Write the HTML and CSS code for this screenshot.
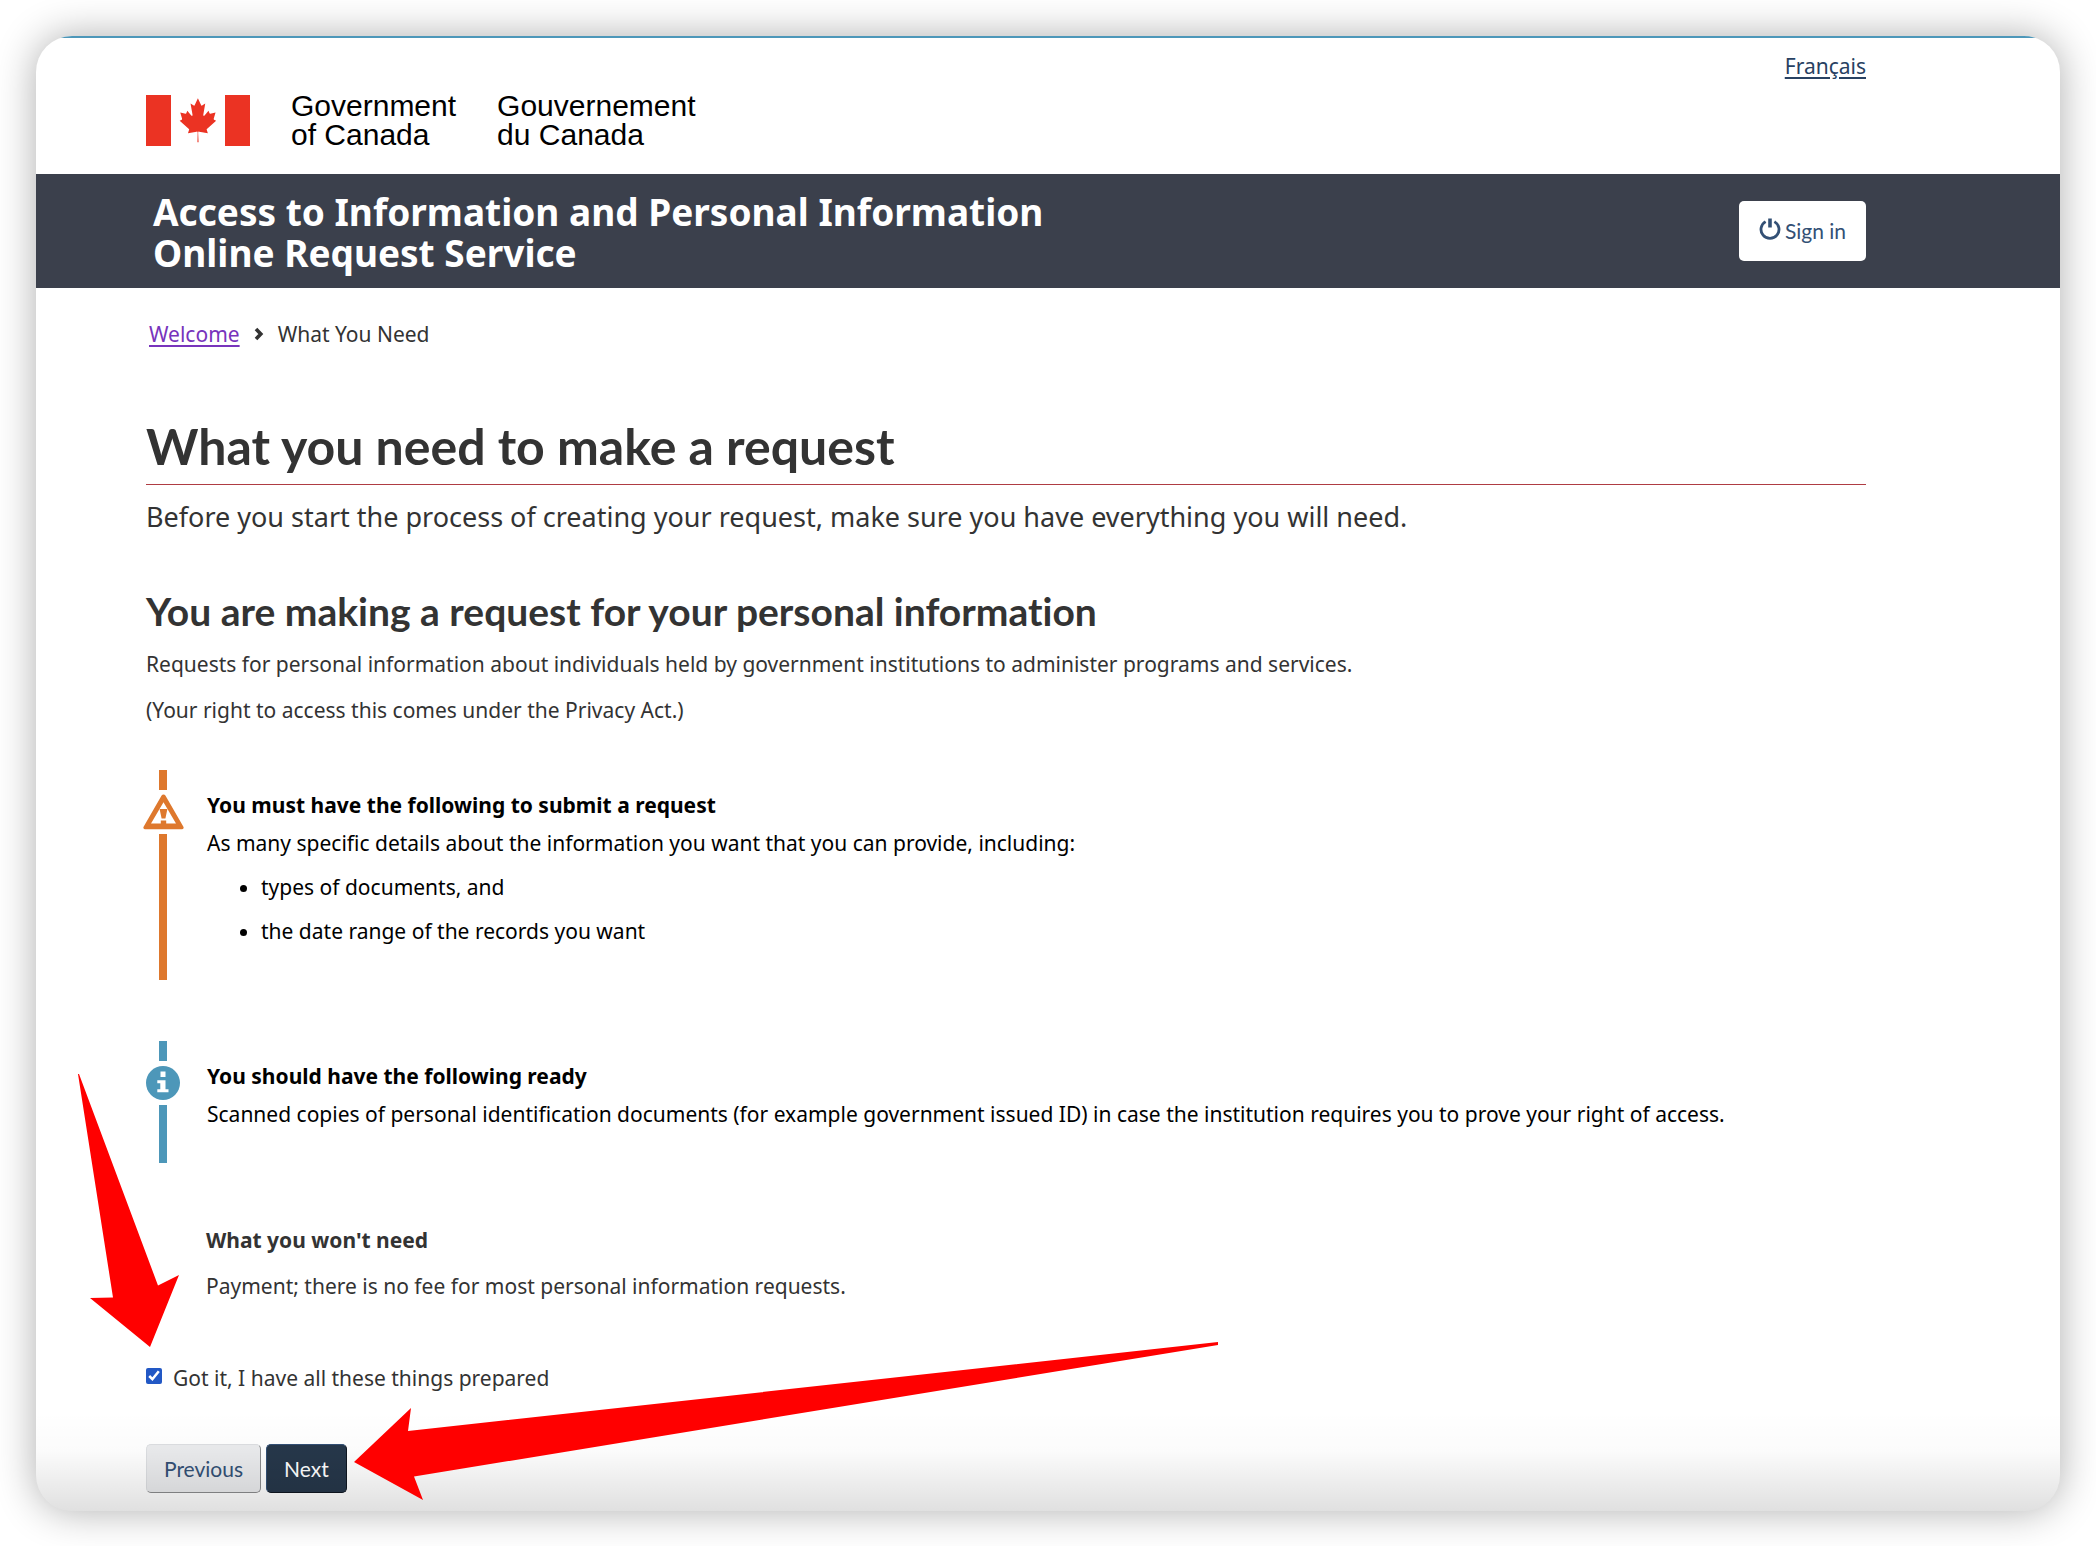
FILE: index.html
```
<!DOCTYPE html>
<html lang="en">
<head>
<meta charset="utf-8">
<meta name="viewport" content="width=device-width, initial-scale=1">
<title>What you need to make a request</title>
<link rel="stylesheet" href="styles.css">
</head>
<body>
<div class="page">
  <header>
    <div class="masthead">
      <a class="lang" href="#fr" lang="fr">Français</a>
      <div class="brand">
        <svg class="flag" viewBox="0 0 104 51" aria-hidden="true">
          <path d="M0 0h25v51H0zM79 0h25v51H79z"/>
          <path transform="translate(52 25) scale(.0098 .0109)" d="m-60 2030 25-863a95 95 0 0 0-111-98l-879 151 116-320a65 65 0 0 0-20-73l-941-762 212-99a65 65 0 0 0 34-79l-186-572 542 115a65 65 0 0 0 73-38l105-247 423 454a65 65 0 0 0 111-57l-204-1052 327 189a65 65 0 0 0 91-27l332-652 332 652a65 65 0 0 0 91 27l327-189-204 1052a65 65 0 0 0 111 57l423-454 105 247a65 65 0 0 0 73 38l542-115-186 572a65 65 0 0 0 34 79l212 99-941 762a65 65 0 0 0-20 73l116 320-879-151a95 95 0 0 0-111 98l45 863z"/>
        </svg>
        <span class="wordmark">Government<br>of Canada</span>
        <span class="wordmark" lang="fr">Gouvernement<br>du Canada</span>
      </div>
    </div>
    <div class="banner">
      <p class="service">Access to Information and Personal Information<br>Online Request Service</p>
      <button class="signin" type="button">
        <svg class="power" viewBox="0 0 22 22" aria-hidden="true">
          <path d="M6.600 3.600A9 9 0 1 0 15.400 3.600" fill="none" stroke="currentColor" stroke-width="2.800"/>
          <path d="M9.200.4h3.600v9H9.200z" fill="currentColor"/>
        </svg>
        Sign in
      </button>
    </div>
    <nav class="crumbs" aria-label="Breadcrumb">
      <a href="#welcome">Welcome</a>
      <svg class="chevron" viewBox="0 0 10 14" aria-hidden="true"><path d="M2 2l4.800 5L2 12" fill="none" stroke="currentColor" stroke-width="3.600"/></svg>
      <span>What You Need</span>
    </nav>
  </header>

  <main>
    <h1>What you need to make a request</h1>
    <p class="lead">Before you start the process of creating your request, make sure you have everything you will need.</p>
    <h2>You are making a request for your personal information</h2>
    <p>Requests for personal information about individuals held by government institutions to administer programs and services.</p>
    <p>(Your right to access this comes under the Privacy Act.)</p>

    <section class="alert warning">
      <div class="rail">
        <svg class="triangle" viewBox="0 0 41 36" aria-hidden="true">
          <path fill="currentColor" fill-rule="evenodd" d="M18.600 1.600a2.200 2.200 0 0 1 3.800 0l18 31.200a1.600 1.600 0 0 1-1.400 2.400H2a1.600 1.600 0 0 1-1.400-2.400zM20.500 8.200L8 29.600h25z"/>
          <path fill="currentColor" d="M16.600 15h7.800l-2 9.500h-3.800zM17.800 26.600h5.400v3.400h-5.400z"/>
        </svg>
      </div>
      <div class="alert-body">
        <h3>You must have the following to submit a request</h3>
        <p>As many specific details about the information you want that you can provide, including:</p>
        <ul>
          <li>types of documents, and</li>
          <li>the date range of the records you want</li>
        </ul>
      </div>
    </section>

    <section class="alert info">
      <div class="rail">
        <svg class="disc" viewBox="0 0 34 34" aria-hidden="true">
          <circle cx="17" cy="17" r="17" fill="currentColor"/>
          <path fill="#fff" d="M14.500 5.500h5v5.500h-5zM11.300 14.200h8.200v9h3v3.100H11.300v-3.100h3v-6h-3z"/>
        </svg>
      </div>
      <div class="alert-body">
        <h3>You should have the following ready</h3>
        <p>Scanned copies of personal identification documents (for example government issued ID) in case the institution requires you to prove your right of access.</p>
      </div>
    </section>

    <section class="exempt">
      <h3>What you won't need</h3>
      <p>Payment; there is no fee for most personal information requests.</p>
    </section>

    <form class="confirm">
      <div class="tick">
        <input type="checkbox" id="ready" checked>
        <label for="ready">Got it, I have all these things prepared</label>
      </div>
      <div class="actions">
        <button class="btn" type="button">Previous</button>
        <button class="btn primary" type="button">Next</button>
      </div>
    </form>
  </main>

  <svg class="arrow arrow-down" viewBox="0 0 101 273" aria-hidden="true"><path d="M0 0L1 0 80 211.500 101 201 72 273 12 224 35 223.500z"/></svg>
  <svg class="arrow arrow-left" viewBox="0 0 864 158" aria-hidden="true"><path d="M0 120L57 66 54 89 864 0V3L60 134.500 69 158z"/></svg>
</div>
</body>
</html>
```
FILE: styles.css
```
* { box-sizing: border-box; }

body {
  margin: 0;
  padding: 36px;
  background: #fff;
  color: #333;
  font: 21px/32px "Noto Sans", sans-serif;
}

h1, h2, h3, p, ul { margin: 0; }
h3 { font-size: 21px; line-height: 32px; font-weight: 700; }
svg { display: block; flex: none; }
button { font: 21px/32px Lato, sans-serif; }

.page {
  position: relative;
  overflow: hidden;
  border-radius: 36px;
  background: #fff;
  box-shadow: 0 0 40px rgba(0, 0, 0, .32);
}

/* shade along the bottom edge of the page */
.page::after {
  content: "";
  position: absolute;
  inset: auto 0 0 0;
  height: 100px;
  background: linear-gradient(rgba(0, 0, 0, 0), rgba(0, 0, 0, .015) 40%, rgba(0, 0, 0, .12));
  pointer-events: none;
}

.masthead, .banner, .crumbs, main { padding-left: 110px; padding-right: 194px; }

.masthead {
  display: flex;
  flex-direction: column;
  gap: 9px;
  padding-top: 12px;
  padding-bottom: 25px;
  border-top: 2px solid #4d97b9;
}
.lang {
  align-self: flex-end;
  color: #284162;
  text-underline-offset: 3px;
}
.brand { display: flex; align-items: center; }
.flag { width: 104px; height: 51px; fill: #eb3323; }
.wordmark {
  margin-left: 41px;
  color: #000;
  font: 30px/29px "Liberation Sans", sans-serif;
}

.banner {
  display: flex;
  align-items: center;
  justify-content: space-between;
  padding-top: 15px;
  padding-bottom: 15px;
  background: #3b404c;
}
.service {
  padding: 2px 0 0 7px;
  color: #fff;
  font-size: 37px;
  line-height: 41px;
  font-weight: 700;
}
.signin {
  display: flex;
  align-items: center;
  gap: 4px;
  padding: 14px 20px;
  border: 0;
  border-radius: 5px;
  background: #fff;
  color: #335075;
}
.power { width: 22px; height: 22px; margin-bottom: 4px; }

.crumbs {
  display: flex;
  align-items: center;
  gap: 14px;
  padding-top: 30px;
}
.crumbs a { margin-left: 3px; color: #7834bc; text-underline-offset: 3px; }
.chevron { width: 10px; height: 14px; }

main { padding-top: 66px; padding-bottom: 18px; }
h1 {
  padding-bottom: 8px;
  border-bottom: 1px solid #af3c43;
  font: 700 50px/60px Lato, sans-serif;
}
.lead { margin-top: 12px; font-size: 27px; line-height: 40px; }
h2 {
  margin: 50px 0 13px;
  font: 700 39px/48px Lato, sans-serif;
  font-variant-ligatures: none;
}
h2 + p { margin-bottom: 14px; }

.alert { display: flex; gap: 27px; color: #000; }
.warning { margin-top: 44px; }
.info { margin-top: 61px; }
.rail {
  display: flex;
  flex-direction: column;
  align-items: center;
  width: 34px;
  flex: none;
}
.warning .rail { color: #de782d; }
.info .rail { color: #4d97b9; }
.rail::before, .rail::after { content: ""; width: 8px; background: currentColor; }
.rail::before { height: 20px; }
.rail::after { flex: 1; }
.triangle { width: 41px; height: 36px; margin: 4px 0; }
.disc { width: 34px; height: 34px; margin: 5px 0; }
.alert-body { padding: 19px 0 33px; }
.alert-body h3 { margin-bottom: 6px; }
.alert-body ul { padding-left: 54px; }
.alert-body li { margin-top: 12px; }

.exempt { margin-top: 61px; padding-left: 60px; }
.exempt h3 { margin-bottom: 14px; }

.confirm { margin-top: 60px; }
.tick { display: flex; gap: 11px; }
.tick input { width: 16px; height: 16px; margin: 6px 0 0; accent-color: #2258c5; }
.actions { display: flex; gap: 5px; margin-top: 50px; }
.btn {
  padding: 8px 17px 7px;
  border: 1px outset #dcdee1;
  border-radius: 5px;
  background: #eaebed;
  color: #335075;
}
.primary { border-color: #335075; background: #26374a; color: #fff; }

/* pointers drawn over the page */
.arrow { position: absolute; z-index: 1; fill: #f00; pointer-events: none; }
.arrow-down { left: 42px; bottom: 164px; width: 101px; height: 273px; }
.arrow-left { left: 318px; bottom: 11px; width: 864px; height: 158px; }
```
